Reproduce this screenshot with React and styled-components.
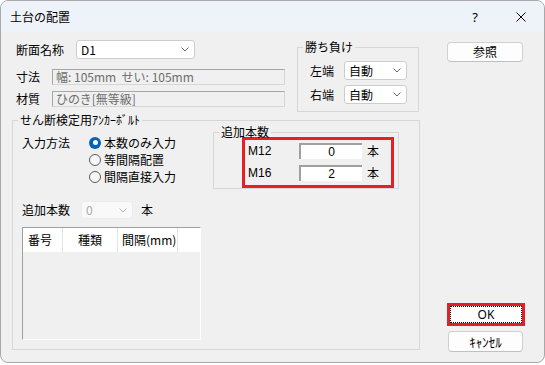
import React from 'react';
import styled, { createGlobalStyle } from 'styled-components';

const Global = createGlobalStyle`
  html, body { margin: 0; padding: 0; background: #ffffff; }
  body {
    font-family: "Noto Sans CJK JP", "Noto Sans", sans-serif;
    font-size: 12px;
    color: #000;
  }
  * { box-sizing: border-box; }
`;

const Window = styled.div`
  width: 545px;
  height: 363px;
  border: 1px solid #a8a8a8;
  border-radius: 8px;
  overflow: hidden;
  background: #f0f0f0;
  display: flex;
  flex-direction: column;
`;

const TitleBar = styled.div`
  height: 31px;
  flex: none;
  background: #eef2f9;
  display: flex;
  align-items: center;
  padding-left: 9px;
`;

const Title = styled.div`
  flex: 1;
  font-size: 12px;
  line-height: 14px;
`;

const TitleBtn = styled.div`
  width: 46px;
  height: 31px;
  display: flex;
  align-items: center;
  justify-content: center;
  font-size: 13px;
  font-family: "Noto Sans", sans-serif;
`;

const Body = styled.div`
  flex: 1;
  display: flex;
  padding-left: 11px;
`;

const Main = styled.div`
  width: 408px;
  flex: none;
  display: flex;
  flex-direction: column;
`;

const Top = styled.div`
  height: 81px;
  display: flex;
  align-items: flex-start;
`;

const Fields = styled.div`
  margin-left: 4px;
  padding-top: 8px;
  display: flex;
  flex-direction: column;
`;

const Row = styled.div`
  display: flex;
  align-items: center;
  height: ${p => p.$h}px;
  margin-top: ${p => p.$mt || 0}px;
`;

const Label = styled.div`
  width: ${p => p.$w}px;
  flex: none;
  line-height: 14px;
  white-space: nowrap;
`;

const Combo = styled.div`
  width: ${p => p.$w}px;
  height: ${p => p.$h}px;
  flex: none;
  background: ${p => (p.$disabled ? '#f9f9f9' : '#ffffff')};
  border: 1px solid ${p => (p.$disabled ? '#ececec' : '#cdcdcd')};
  border-radius: 3px;
  display: flex;
  align-items: center;
  padding-left: 4px;
  padding-right: 5px;
  color: ${p => (p.$disabled ? '#a8a8a8' : '#000')};
`;

const ComboText = styled.span`
  flex: 1;
  line-height: 14px;
`;

const Sunken = styled.div`
  width: 233px;
  height: 16px;
  flex: none;
  border: 1px solid #d6d6d6;
  border-top-color: #a6a6a6;
  border-left-color: #a6a6a6;
  padding-left: 3px;
  color: #6d6d6d;
  display: flex;
  align-items: center;
  white-space: pre;
  line-height: 14px;
`;

const Group = styled.fieldset`
  margin: ${p => p.$m || 0};
  padding: 0;
  width: ${p => p.$w}px;
  border: 1px solid #d7d7d7;
  min-width: 0;
  flex: none;
`;

const Legend = styled.legend`
  margin-left: 5px;
  padding: 0 2px;
  line-height: ${p => p.$lh || 14}px;
  white-space: nowrap;
`;

const GroupBody = styled.div`
  padding: ${p => p.$pad};
`;

const SideRows = styled.div`
  display: flex;
  flex-direction: column;
  gap: 5px;
`;

const Upper = styled.div`
  display: flex;
  align-items: flex-start;
`;

const MethodPart = styled.div`
  width: 191px;
  flex: none;
  display: flex;
  align-items: flex-start;
  padding-top: 7px;
`;

const MethodLabel = styled.div`
  width: 67px;
  height: 17px;
  display: flex;
  align-items: center;
  line-height: 14px;
`;

const RadioList = styled.div`
  display: flex;
  flex-direction: column;
`;

const RadioRow = styled.div`
  height: 17px;
  display: flex;
  align-items: center;
  line-height: 14px;
`;

const RadioCircle = styled.span`
  width: 12px;
  height: 12px;
  border-radius: 50%;
  flex: none;
  margin-right: 3px;
  display: flex;
  align-items: center;
  justify-content: center;
  background: ${p => (p.$on ? '#0063b8' : '#f7f7f7')};
  border: ${p => (p.$on ? 'none' : '1px solid #5c5c5c')};
  &::after {
    content: '';
    width: 5px;
    height: 5px;
    border-radius: 50%;
    background: #ffffff;
    display: ${p => (p.$on ? 'block' : 'none')};
  }
`;

const RedBox = styled.div`
  width: 152px;
  border: 3px solid #e51f26;
  padding: 3px 0 4px 3px;
  display: flex;
  flex-direction: column;
  gap: 6px;
`;

const CountRow = styled.div`
  height: 16px;
  display: flex;
  align-items: center;
`;

const CountLabel = styled.div`
  width: 51px;
  flex: none;
  line-height: 14px;
  font-family: "Liberation Sans", "Noto Sans", sans-serif;
  font-size: 12px;
`;

const NumInput = styled.div`
  width: 63px;
  height: 16px;
  flex: none;
  background: #ffffff;
  border-top: 2px solid #a0a0a0;
  border-left: 2px solid #a0a0a0;
  display: flex;
  align-items: center;
  justify-content: center;
  line-height: 13px;
  font-family: "Liberation Sans", "Noto Sans", sans-serif;
`;

const Unit = styled.span`
  margin-left: ${p => p.$ml || 5}px;
  line-height: 14px;
`;

const Lower = styled.div`
  margin-top: 12px;
  height: 18px;
  display: flex;
  align-items: center;
`;

const List = styled.div`
  margin-top: 8px;
  width: 179px;
  height: 113px;
  border-top: 1px solid #a0a0a0;
  border-left: 1px solid #a0a0a0;
  border-right: 1px solid #ffffff;
  border-bottom: 1px solid #ffffff;
  background: #f0f0f0;
`;

const ListHeader = styled.div`
  display: flex;
  height: 24px;
  background: #ffffff;
`;

const HeadCell = styled.div`
  width: ${p => p.$w}px;
  flex: ${p => (p.$w ? 'none' : '1')};
  border-right: ${p => (p.$w ? '1px solid #e3e3e3' : 'none')};
  display: flex;
  align-items: center;
  justify-content: ${p => (p.$center ? 'center' : 'flex-start')};
  padding-left: ${p => p.$pl || 0}px;
  line-height: 14px;
  white-space: nowrap;
`;

const ButtonCol = styled.div`
  margin-left: 27px;
  padding: 10px 0 10px 0;
  display: flex;
  flex-direction: column;
  align-items: flex-start;
`;

const Button = styled.div`
  width: ${p => p.$w}px;
  height: ${p => p.$h}px;
  margin-left: ${p => p.$ml || 0}px;
  margin-top: ${p => p.$mt || 0};
  background: #fdfdfd;
  border: 1px solid #d0d0d0;
  border-bottom-color: #c0c0c0;
  border-radius: 4px;
  display: flex;
  align-items: center;
  justify-content: center;
  line-height: 14px;
  font-size: ${p => p.$fs || 12}px;
`;

const OkButton = styled.div`
  margin-top: auto;
  width: 78px;
  height: 23px;
  border: 3px solid #e51f26;
  background: #ffffff;
  display: flex;
  padding: 0;
`;

const FocusRect = styled.div`
  flex: 1;
  margin: 0;
  border: 1px dotted #000;
  display: flex;
  align-items: center;
  justify-content: center;
  font-family: "Noto Sans", sans-serif;
  font-size: 12px;
  line-height: 14px;
`;

const Chevron = ({ color = '#666' }) => (
  <svg width="8" height="5" viewBox="0 0 8 5">
    <polyline points="0.5,0.5 4,4 7.5,0.5" fill="none" stroke={color} strokeWidth="1" />
  </svg>
);

const CloseIcon = () => (
  <svg width="10" height="10" viewBox="0 0 10 10">
    <path d="M0.5 0.5 L9.5 9.5 M9.5 0.5 L0.5 9.5" stroke="#000" strokeWidth="1" fill="none" />
  </svg>
);

export default function App() {
  return (
    <>
      <Global />
      <Window>
        <TitleBar>
          <Title>土台の配置</Title>
          <TitleBtn>?</TitleBtn>
          <TitleBtn>
            <CloseIcon />
          </TitleBtn>
        </TitleBar>
        <Body>
          <Main>
            <Top>
              <Fields>
                <Row $h={19}>
                  <Label $w={60}>断面名称</Label>
                  <Combo $w={119} $h={19}>
                    <ComboText>D1</ComboText>
                    <Chevron />
                  </Combo>
                </Row>
                <Row $h={16} $mt={10}>
                  <Label $w={36}>寸法</Label>
                  <Sunken>{'幅: 105mm  せい: 105mm'}</Sunken>
                </Row>
                <Row $h={16} $mt={6}>
                  <Label $w={36}>材質</Label>
                  <Sunken>ひのき[無等級]</Sunken>
                </Row>
              </Fields>
              <Group $w={122} $m="8px 0 0 12px">
                <Legend>勝ち負け</Legend>
                <GroupBody $pad="7px 0 7px 12px">
                  <SideRows>
                    <Row $h={19}>
                      <Label $w={34}>左端</Label>
                      <Combo $w={63} $h={19}>
                        <ComboText>自動</ComboText>
                        <Chevron />
                      </Combo>
                    </Row>
                    <Row $h={19}>
                      <Label $w={34}>右端</Label>
                      <Combo $w={63} $h={19}>
                        <ComboText>自動</ComboText>
                        <Chevron />
                      </Combo>
                    </Row>
                  </SideRows>
                </GroupBody>
              </Group>
            </Top>
            <Group $w={408}>
              <Legend>せん断検定用ｱﾝｶｰﾎﾞﾙﾄ</Legend>
              <GroupBody $pad="0 0 9px 9px">
                <Upper>
                  <MethodPart>
                    <MethodLabel>入力方法</MethodLabel>
                    <RadioList>
                      <RadioRow>
                        <RadioCircle $on />
                        本数のみ入力
                      </RadioRow>
                      <RadioRow>
                        <RadioCircle />
                        等間隔配置
                      </RadioRow>
                      <RadioRow>
                        <RadioCircle />
                        間隔直接入力
                      </RadioRow>
                    </RadioList>
                  </MethodPart>
                  <Group $w={186}>
                    <Legend $lh={10}>追加本数</Legend>
                    <GroupBody $pad="0 0 0 28px">
                      <RedBox>
                        <CountRow>
                          <CountLabel>M12</CountLabel>
                          <NumInput>0</NumInput>
                          <Unit>本</Unit>
                        </CountRow>
                        <CountRow>
                          <CountLabel>M16</CountLabel>
                          <NumInput>2</NumInput>
                          <Unit>本</Unit>
                        </CountRow>
                      </RedBox>
                    </GroupBody>
                  </Group>
                </Upper>
                <Lower>
                  <Label $w={59}>追加本数</Label>
                  <Combo $w={52} $h={18} $disabled>
                    <ComboText>0</ComboText>
                    <Chevron color="#b5b5b5" />
                  </Combo>
                  <Unit $ml={8}>本</Unit>
                </Lower>
                <List>
                  <ListHeader>
                    <HeadCell $w={40} $pl={5}>番号</HeadCell>
                    <HeadCell $w={55} $center>種類</HeadCell>
                    <HeadCell $w={60} $pl={4}>間隔(mm)</HeadCell>
                    <HeadCell />
                  </ListHeader>
                </List>
              </GroupBody>
            </Group>
          </Main>
          <ButtonCol>
            <Button $w={76} $h={20}>参照</Button>
            <OkButton>
              <FocusRect>OK</FocusRect>
            </OkButton>
            <Button $w={75} $h={21} $ml={1} $mt="5px" $fs={13}>ｷｬﾝｾﾙ</Button>
          </ButtonCol>
        </Body>
      </Window>
    </>
  );
}
